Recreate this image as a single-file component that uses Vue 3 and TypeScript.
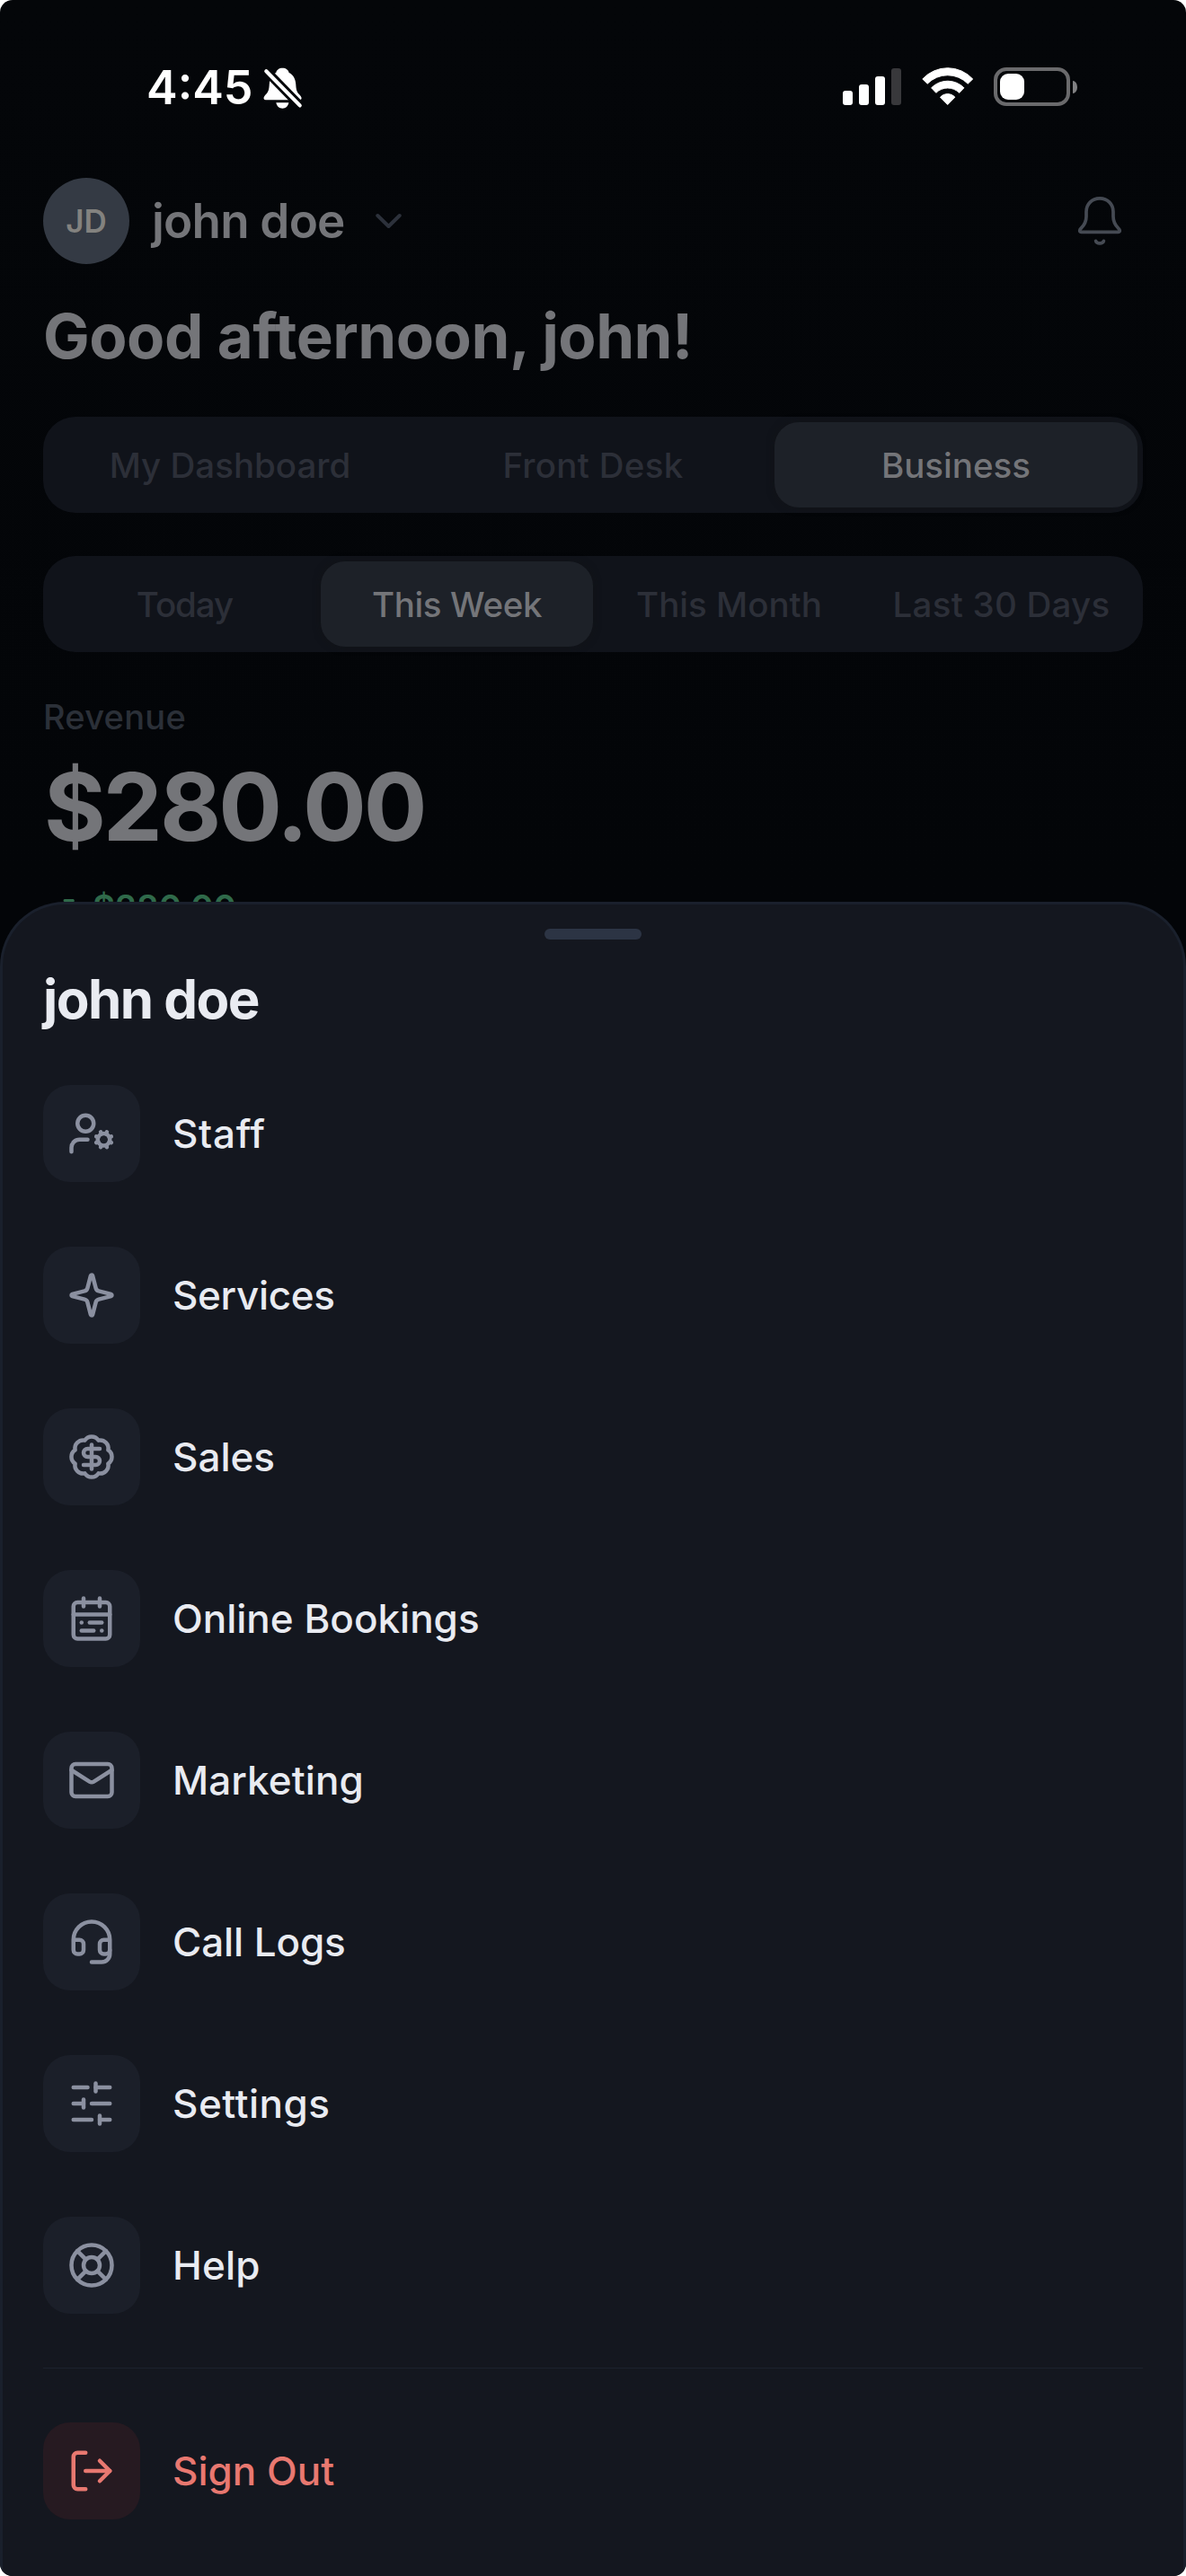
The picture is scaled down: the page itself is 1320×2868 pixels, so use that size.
<script setup lang="ts">
interface Segment {
  label: string
  active?: boolean
  tracking?: number
}

interface MenuItem {
  label: string
  tracking: number
  paths: string[]
}

const views: Segment[] = [
  { label: 'My Dashboard' },
  { label: 'Front Desk', tracking: 0.29 },
  { label: 'Business', active: true },
]

const periods: Segment[] = [
  { label: 'Today', tracking: -1.04 },
  { label: 'This Week', active: true, tracking: -0.36 },
  { label: 'This Month' },
  { label: 'Last 30 Days', tracking: 0.25 },
]

const menu: MenuItem[] = [
  {
    label: 'Staff',
    tracking: 0.7,
    paths: [
      'M10 15H6a4 4 0 0 0-4 4v2',
      'm14.305 16.53.923-.382',
      'm15.228 13.852-.923-.383',
      'm16.852 12.228-.383-.923',
      'm16.852 17.772-.383.924',
      'm19.148 12.228.383-.923',
      'm19.53 18.696-.382-.924',
      'm20.772 13.852.924-.383',
      'm20.772 16.148.924.383',
      'M21 15a3 3 0 1 1-6 0 3 3 0 0 1 6 0Z',
      'M13 7a4 4 0 1 1-8 0 4 4 0 0 1 8 0Z',
    ],
  },
  {
    label: 'Services',
    tracking: -0.34,
    paths: [
      'M9.937 15.5A2 2 0 0 0 8.5 14.063l-6.135-1.582a.5.5 0 0 1 0-.962L8.5 9.936A2 2 0 0 0 9.937 8.5l1.582-6.135a.5.5 0 0 1 .963 0L14.063 8.5A2 2 0 0 0 15.5 9.937l6.135 1.581a.5.5 0 0 1 0 .964L15.5 14.063a2 2 0 0 0-1.437 1.437l-1.582 6.135a.5.5 0 0 1-.963 0z',
    ],
  },
  {
    label: 'Sales',
    tracking: 0,
    paths: [
      'M3.85 8.62a4 4 0 0 1 4.78-4.77 4 4 0 0 1 6.74 0 4 4 0 0 1 4.78 4.78 4 4 0 0 1 0 6.74 4 4 0 0 1-4.77 4.78 4 4 0 0 1-6.75 0 4 4 0 0 1-4.78-4.77 4 4 0 0 1 0-6.76Z',
      'M16 8h-6a2 2 0 1 0 0 4h4a2 2 0 1 1 0 4H8',
      'M12 18V6',
    ],
  },
  {
    label: 'Online Bookings',
    tracking: 0,
    paths: [
      'M5 4h14a2 2 0 0 1 2 2v14a2 2 0 0 1-2 2H5a2 2 0 0 1-2-2V6a2 2 0 0 1 2-2Z',
      'M16 2v4',
      'M3 10h18',
      'M8 2v4',
      'M17 14h-6',
      'M13 18H7',
      'M7 14h.01',
      'M17 18h.01',
    ],
  },
  {
    label: 'Marketing',
    tracking: 0.08,
    paths: [
      'M4 4h16a2 2 0 0 1 2 2v12a2 2 0 0 1-2 2H4a2 2 0 0 1-2-2V6a2 2 0 0 1 2-2Z',
      'm22 7-8.97 5.7a1.94 1.94 0 0 1-2.06 0L2 7',
    ],
  },
  {
    label: 'Call Logs',
    tracking: -0.1,
    paths: [
      'M3 11h3a2 2 0 0 1 2 2v3a2 2 0 0 1-2 2H5a2 2 0 0 1-2-2v-5Zm0 0a9 9 0 1 1 18 0m0 0v5a2 2 0 0 1-2 2h-1a2 2 0 0 1-2-2v-3a2 2 0 0 1 2-2h3Z',
      'M21 16v2a4 4 0 0 1-4 4h-5',
    ],
  },
  {
    label: 'Settings',
    tracking: 0.5,
    paths: [
      'M21 4h-7',
      'M10 4H3',
      'M21 12h-9',
      'M8 12H3',
      'M21 20h-5',
      'M12 20H3',
      'M14 2v4',
      'M8 10v4',
      'M16 18v4',
    ],
  },
  {
    label: 'Help',
    tracking: 0.2,
    paths: [
      'M22 12a10 10 0 1 1-20 0 10 10 0 0 1 20 0Z',
      'm4.93 4.93 4.24 4.24',
      'm14.83 9.17 4.24-4.24',
      'm14.83 14.83 4.24 4.24',
      'm9.17 14.83-4.24 4.24',
      'M16 12a4 4 0 1 1-8 0 4 4 0 0 1 8 0Z',
    ],
  },
]

const tracked = (value = 0) => ({ letterSpacing: `${value}px` })
</script>

<template>
  <div class="screen">
    <header class="status">
      <div class="clock">
        <span class="time">4:45</span>
        <svg class="muted" width="46" height="48" viewBox="0 0 46 48">
          <path
            d="M22.4 1.7c3.8 0 6.6 2 7.2 5.2 4.6 2 7.2 6.600 7.600 12.400.4 6 .9 8.600 3.200 11.200 1.800 1.900 3.200 3.200 3.200 4.800 0 1.200-.9 2-2.200 2H3.700c-1.300 0-2.200-.8-2.200-2 0-1.600 1.200-2.900 3-4.800 2.400-2.600 3-5.200 3.300-11.200.4-5.800 3-10.400 7.400-12.400.7-3.200 3.400-5.200 7.200-5.200Z"
            fill="#fff"
          />
          <path d="M15.3 40.3h14.1c-.6 3.8-3.5 6.4-7 6.4s-6.5-2.6-7.1-6.4Z" fill="#fff" />
          <path d="M4.3 5 41.8 43.5" stroke="#040609" stroke-width="10" />
          <path d="M4.3 5.3 41.7 43.4" stroke="#fff" stroke-width="4.2" stroke-linecap="round" />
        </svg>
      </div>
      <div class="radios">
        <div class="signal"><i /><i /><i /><i /></div>
        <svg class="wifi" width="58" height="43" viewBox="0 0 58 43">
          <g fill="#fff" stroke="#fff" stroke-width="1" stroke-linejoin="round">
            <path d="M.8 13A38 38 0 0 1 56.7 13L51.2 18.2A31.5 31.5 0 0 0 6.2 18.2Z" />
            <path d="M10.6 22.8A25.5 25.5 0 0 1 46.9 22.8L41.7 28.3A18.4 18.4 0 0 0 15.8 28.3Z" />
            <path d="M20.5 33.2A11 11 0 0 1 36.9 33.2L28.7 41.5Z" />
          </g>
        </svg>
        <div class="battery">
          <div class="shell"><i /></div>
          <div class="tip" />
        </div>
      </div>
    </header>

    <main class="page">
      <div class="account">
        <div class="avatar">JD</div>
        <span class="name">john doe</span>
        <svg class="chevron" width="30" height="18" viewBox="0 0 30 18">
          <path d="M2.3 3 14.5 15 26.7 3" />
        </svg>
        <svg class="bell" width="50" height="56" viewBox="0 0 50 56">
          <path
            d="M25 2.9C16.2 2.9 10.1 9.3 10 17.800V23C10 28.500 8 32.500 4.200 36.200 1.800 38.600 2.600 40.400 4.700 40.400H45.300C47.400 40.400 48.200 38.600 45.800 36.200 42 32.500 40 28.500 40 23V17.800C39.900 9.300 33.800 2.900 25 2.900Z"
          />
          <path d="M20.6 50.3c1.3 3.4 7.5 3.4 8.8 0" />
        </svg>
      </div>

      <h1 class="greeting">Good afternoon, john!</h1>

      <nav class="segments">
        <span
          v-for="view in views"
          :key="view.label"
          class="segment"
          :class="{ active: view.active }"
          :style="tracked(view.tracking)"
          >{{ view.label }}</span
        >
      </nav>
      <nav class="segments">
        <span
          v-for="period in periods"
          :key="period.label"
          class="segment"
          :class="{ active: period.active }"
          :style="tracked(period.tracking)"
          >{{ period.label }}</span
        >
      </nav>

      <p class="metric">Revenue</p>
      <p class="amount">$280.00</p>
      <div class="trend">
        <svg width="36" height="36" viewBox="0 0 24 24">
          <path d="M16 7h6v6" />
          <path d="m22 7-8.5 8.5-5-5L2 17" />
        </svg>
        <span>$280.00</span>
      </div>
    </main>

    <section class="sheet">
      <div class="handle" />
      <h2 class="title">john doe</h2>
      <ul class="menu">
        <li v-for="item in menu" :key="item.label" class="row">
          <span class="tile">
            <svg class="icon" viewBox="0 0 24 24">
              <path v-for="d in item.paths" :key="d" :d="d" />
            </svg>
          </span>
          <span class="label" :style="tracked(item.tracking)">{{ item.label }}</span>
        </li>
      </ul>
      <div class="divider" />
      <div class="row danger">
        <span class="tile">
          <svg class="icon" viewBox="0 0 24 24">
            <path d="M9 21H5a2 2 0 0 1-2-2V5a2 2 0 0 1 2-2h4" />
            <path d="m16 17 5-5-5-5" />
            <path d="M21 12H9" />
          </svg>
        </span>
        <span class="label">Sign Out</span>
      </div>
    </section>
  </div>
</template>

<style>
body {
  margin: 0;
  background: #fff;
}
</style>

<style scoped>
.screen {
  position: relative;
  box-sizing: border-box;
  width: 1320px;
  height: 2868px;
  overflow: hidden;
  border-radius: 14px;
  background: linear-gradient(#040609 0, #030508 1004px);
  font-family: Inter, 'Liberation Sans', sans-serif;
}

svg {
  display: block;
  flex: none;
  fill: none;
}

h1,
h2,
p,
ul {
  margin: 0;
  padding: 0;
  list-style: none;
}

/* Status bar */
.status {
  display: flex;
  justify-content: space-between;
  align-items: flex-start;
  box-sizing: border-box;
  height: 198px;
  padding: 74px 121px 0 163px;
}

.clock {
  display: flex;
  align-items: center;
  gap: 10px;
  height: 48px;
}

.time {
  color: #fff;
  font-size: 52px;
  font-weight: 600;
  line-height: 48px;
}

.radios {
  display: flex;
  padding-top: 1px;
}

.signal {
  display: flex;
  align-items: flex-end;
  gap: 7px;
  height: 42px;
}

.signal i {
  width: 11px;
  border-radius: 3px;
  background: #fff;
}

.signal i:nth-child(1) {
  height: 16px;
}

.signal i:nth-child(2) {
  height: 23px;
}

.signal i:nth-child(3) {
  height: 32px;
}

.signal i:nth-child(4) {
  height: 41px;
  background: #38383b;
}

.wifi {
  margin: 0 22px 0 23px;
}

.battery {
  display: flex;
  align-items: center;
  gap: 3px;
  height: 43px;
}

.shell {
  display: flex;
  box-sizing: border-box;
  width: 85px;
  height: 43px;
  padding: 3px;
  border: 4px solid #6a6a6c;
  border-radius: 14px;
}

.shell i {
  width: 27px;
  border-radius: 9px;
  background: #fff;
}

.tip {
  width: 5px;
  height: 14px;
  border-radius: 0 5px 5px 0 / 0 7px 7px 0;
  background: #818183;
}

/* Dimmed dashboard */
.page {
  padding: 0 48px;
}

.account {
  display: flex;
  align-items: center;
  height: 96px;
}

.avatar {
  width: 96px;
  height: 96px;
  border-radius: 50%;
  background: #343a44;
  color: #83827f;
  font-size: 35px;
  font-weight: 600;
  line-height: 96px;
  text-align: center;
}

.name {
  width: 249px;
  margin-left: 25px;
  color: #747579;
  font-size: 53px;
  font-weight: 600;
  line-height: 96px;
  letter-spacing: -0.8px;
  white-space: nowrap;
}

.chevron {
  stroke: #2c313b;
  stroke-width: 4;
  stroke-linecap: round;
  stroke-linejoin: round;
}

.bell {
  margin-left: auto;
  margin-right: 23px;
  stroke: #454a53;
  stroke-width: 3.7;
  stroke-linecap: round;
  stroke-linejoin: round;
}

.greeting {
  margin: 40px 0 50px;
  color: #747579;
  font-size: 69px;
  font-weight: 700;
  line-height: 80px;
  letter-spacing: -0.5px;
}

.segments {
  display: flex;
  box-sizing: border-box;
  height: 107px;
  margin-bottom: 48px;
  padding: 6px;
  border-radius: 36px;
  background: #10131a;
}

.segment {
  flex: 1 1 0;
  border-radius: 27px;
  color: #2c2f38;
  font-size: 38.5px;
  font-weight: 500;
  line-height: 96px;
  text-align: center;
  white-space: nowrap;
}

.segment.active {
  background: #1d2128;
  box-shadow: 0 0 9px rgba(18, 20, 22, 0.6);
  color: #747579;
}

.metric {
  margin-top: -1px;
  color: #2b3038;
  font-size: 38px;
  font-weight: 500;
  line-height: 50px;
  letter-spacing: 0.26px;
}

.amount {
  margin: 10px 0 29px 1px;
  color: #747579;
  font-size: 105px;
  font-weight: 700;
  line-height: 130px;
  letter-spacing: -3px;
}

.trend {
  display: flex;
  align-items: center;
  gap: 19px;
  height: 36px;
  color: #2f6a4a;
  font-size: 38.5px;
  font-weight: 600;
}

.trend svg {
  stroke: #2f6a4a;
  stroke-width: 2;
  stroke-linecap: round;
  stroke-linejoin: round;
}

/* Account sheet, drawn over the dashboard */
.sheet {
  position: absolute;
  inset: 1004px 0 0;
  box-sizing: border-box;
  padding: 27px 45px 0;
  border: 3px solid #1a202c;
  border-bottom: 0;
  border-radius: 72px 72px 0 0;
  background: #14171f;
}

.handle {
  width: 108px;
  height: 12px;
  margin: 0 auto;
  border-radius: 6px;
  background: #2c3444;
}

.title {
  margin: 26px 0 20px;
  color: #e9ebf1;
  font-size: 60px;
  font-weight: 700;
  line-height: 80px;
  letter-spacing: -1.55px;
}

.row {
  display: flex;
  align-items: center;
  gap: 36px;
  height: 180px;
}

.tile {
  display: flex;
  align-items: center;
  justify-content: center;
  width: 108px;
  height: 108px;
  border-radius: 30px;
  background: #1b1f29;
}

.icon {
  width: 54px;
  height: 54px;
  stroke: #8b90a0;
  stroke-width: 2;
  stroke-linecap: round;
  stroke-linejoin: round;
}

.label {
  color: #e9ebf1;
  font-size: 44px;
  font-weight: 500;
  line-height: 60px;
}

.divider {
  height: 1px;
  margin: 24px 0;
  background: #1c222e;
}

.danger .tile {
  background: #261a21;
}

.danger .icon {
  stroke: #e87870;
}

.danger .label {
  color: #e87870;
}
</style>
